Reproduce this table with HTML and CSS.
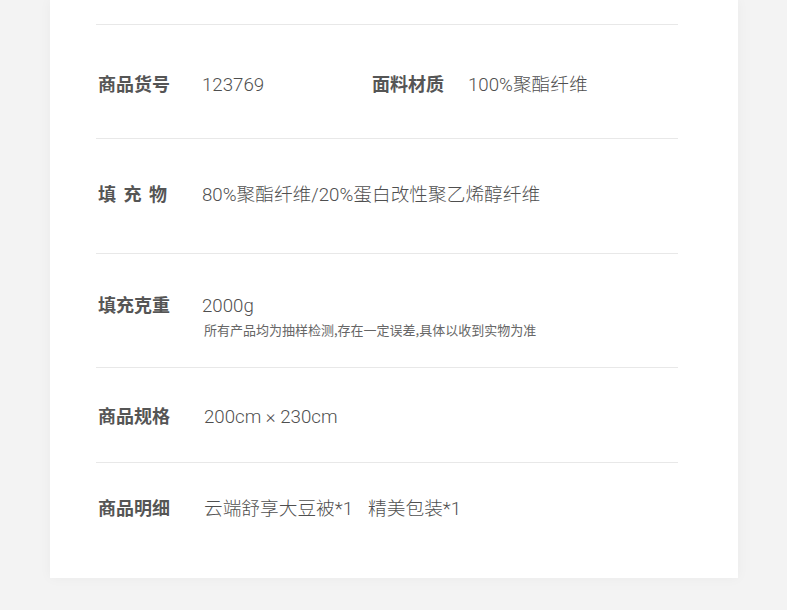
FILE: index.html
```html
<!DOCTYPE html>
<html lang="zh-CN">
<head>
  <meta charset="UTF-8" />
  <title>商品参数</title>
  <meta name="viewport" content="width=device-width, initial-scale=1" />
  <link rel="stylesheet" href="styles.css">
</head>
<body>
  <div class="page">
    <div class="card">
      <div class="specs">
        <div class="row row-1">
          <div class="pair">
            <span class="label">商品货号</span>
            <span class="value">123769</span>
          </div>
          <div class="pair pair-2">
            <span class="label">面料材质</span>
            <span class="value">100%聚酯纤维</span>
          </div>
        </div>

        <div class="row row-2">
          <div class="pair">
            <span class="label spaced">填充物</span>
            <span class="value">80%聚酯纤维/20%蛋白改性聚乙烯醇纤维</span>
          </div>
        </div>

        <div class="row row-3">
          <div class="pair">
            <span class="label">填充克重</span>
            <div>
              <span class="value">2000g</span>
              <p class="note">所有产品均为抽样检测,存在一定误差,具体以收到实物为准</p>
            </div>
          </div>
        </div>

        <div class="row row-4">
          <div class="pair">
            <span class="label">商品规格</span>
            <span class="value shift">200cm × 230cm</span>
          </div>
        </div>

        <div class="row row-5">
          <div class="pair">
            <span class="label">商品明细</span>
            <span class="value shift">云端舒享大豆被*1<span class="gap"></span>精美包装*1</span>
          </div>
        </div>
      </div>
    </div>
  </div>
</body>
</html>
```

FILE: styles.css
```css
body {
  margin: 0;
  background: #fff;
  font-family: Roboto, "Noto Sans CJK SC", sans-serif;
  color: #555;
}
.page {
  width: 787px;
  height: 610px;
  box-sizing: border-box;
  padding: 0 49px 32px 50px;
  background: #f3f3f3;
}
.card {
  height: 578px;
  background: #fff;
  box-shadow: 0 0 12px rgba(0, 0, 0, 0.04);
  padding-top: 24px;
  box-sizing: border-box;
}
.specs {
  margin-left: 46px;
  width: 582px;
}
.row {
  display: flex;
  box-sizing: border-box;
  border-top: 1px solid #e8e8e8;
}
.row-1 { height: 114px; padding-top: 47px; }
.row-2 { height: 115px; padding-top: 43px; }
.row-3 { height: 114px; padding-top: 39px; }
.row-4 { height: 95px; padding-top: 36px; }
.row-5 { height: 116px; padding-top: 33px; }

.pair {
  display: flex;
  align-items: flex-start;
  padding-left: 2px;
  width: 274px;
}
.pair-2 {
  padding-left: 0;
}
.label {
  width: 104px;
  flex-shrink: 0;
  margin-top: -2px;
  font-family: "Noto Sans CJK SC", sans-serif;
  font-size: 18px;
  font-weight: 700;
  line-height: 26px;
  color: #555;
}
.pair-2 .label {
  width: 96px;
}
.label.spaced {
  letter-spacing: 7.5px;
}
.value {
  font-size: 18.7px;
  line-height: 26px;
  font-weight: 300;
  color: #4f4f4f;
  white-space: nowrap;
}
.value.shift {
  margin-left: 2px;
}
.gap {
  display: inline-block;
  width: 15px;
}
.note {
  margin: 2px 0 0 2px;
  font-family: "Noto Sans CJK SC", sans-serif;
  font-size: 13px;
  line-height: 18px;
  color: #666;
  white-space: nowrap;
}
```
